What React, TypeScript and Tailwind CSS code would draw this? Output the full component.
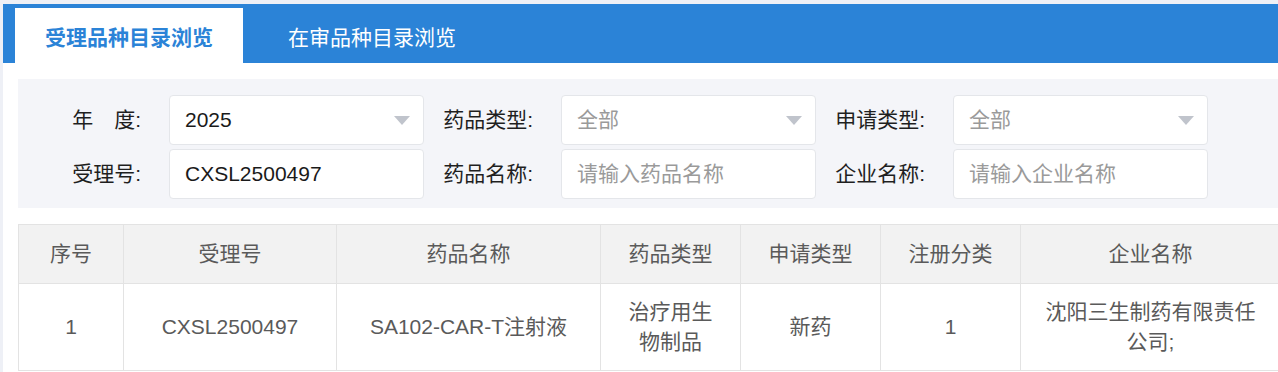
import React from 'react';

const font = { fontFamily: '"Liberation Sans", "Noto Sans CJK SC", sans-serif' };

function Caret() {
  return (
    <span className="w-0 h-0 border-l-[8px] border-r-[8px] border-t-[9px] border-l-transparent border-r-transparent border-t-[#c0c4cc]" />
  );
}

function Field({
  label,
  value,
  placeholder,
  select,
}: {
  label: string;
  value?: string;
  placeholder?: string;
  select?: boolean;
}) {
  return (
    <div className="flex items-center">
      <div className="w-[137px] pr-[28px] text-right text-[21px] leading-[26px] text-[#1f1f1f]">{label}</div>
      <div className="w-[255px] h-[50px] bg-white border border-[#e4e6ea] rounded-[4px] flex items-center justify-between pl-[15px] pr-[13px]">
        <span className={`text-[21px] leading-[26px] ${value ? 'text-[#1a1a1a]' : 'text-[#9a9a9a]'}`}>
          {value || placeholder}
        </span>
        {select && <Caret />}
      </div>
    </div>
  );
}

const columns = [
  { title: '序号', w: 'w-[105px]' },
  { title: '受理号', w: 'w-[213px]' },
  { title: '药品名称', w: 'w-[264px]' },
  { title: '药品类型', w: 'w-[140px]' },
  { title: '申请类型', w: 'w-[140px]' },
  { title: '注册分类', w: 'w-[140px]' },
  { title: '企业名称', w: 'w-[260px]' },
];

const rows = [
  ['1', 'CXSL2500497', 'SA102-CAR-T注射液', '治疗用生物制品', '新药', '1', '沈阳三生制药有限责任公司;'],
];

export default function App() {
  return (
    <div className="w-[1278px] h-[372px] overflow-hidden bg-[#eef0f6] pt-[4px] pl-[3px]" style={font}>
      <div className="bg-white w-[1300px] h-[400px]">
        {/* tabs */}
        <div className="h-[59px] bg-[#2b83d7] flex items-end pl-[12px]">
          <div className="w-[228px] h-[55px] bg-white flex items-center justify-center pt-[4px] text-[21px] font-bold text-[#2b83d7]">
            受理品种目录浏览
          </div>
          <div className="w-[228px] h-[55px] ml-[15px] flex items-center justify-center pt-[4px] text-[21px] text-white">
            在审品种目录浏览
          </div>
        </div>

        <div className="pl-[15px] pt-[16px]">
          {/* filters */}
          <div className="w-[1290px] bg-[#f4f5f9] pt-[16px] pb-[9px] pl-[14px] flex flex-col gap-[4px]">
            <div className="flex">
              <Field label="年　度:" value="2025" select />
              <Field label="药品类型:" placeholder="全部" select />
              <Field label="申请类型:" placeholder="全部" select />
            </div>
            <div className="flex">
              <Field label="受理号:" value="CXSL2500497" />
              <Field label="药品名称:" placeholder="请输入药品名称" />
              <Field label="企业名称:" placeholder="请输入企业名称" />
            </div>
          </div>

          {/* table */}
          <table className="mt-[16px] w-[1262px] table-fixed border-collapse text-[21px] text-[#5a5a5a]">
            <thead>
              <tr className="bg-[#f2f2f2]">
                {columns.map((c) => (
                  <th key={c.title} className={`${c.w} h-[59px] border border-[#e3e3e3] font-normal text-center leading-[26px]`}>
                    {c.title}
                  </th>
                ))}
              </tr>
            </thead>
            <tbody>
              {rows.map((r, i) => (
                <tr key={i}>
                  {r.map((cell, j) => (
                    <td key={j} className="border border-[#e3e3e3] text-center px-[20px] py-[13px] leading-[30px]">
                      {cell}
                    </td>
                  ))}
                </tr>
              ))}
            </tbody>
          </table>
        </div>
      </div>
    </div>
  );
}
